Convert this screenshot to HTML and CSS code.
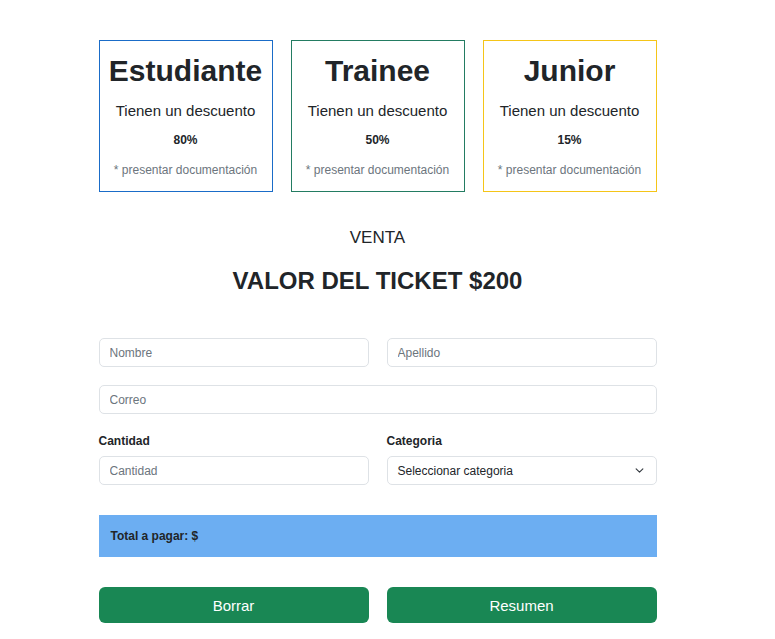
FILE: index.html
```html
<!DOCTYPE html>
<html lang="es">
<head>
<meta charset="utf-8">
<title>Venta</title>
<link rel="stylesheet" href="styles.css">
</head>
<body>
<main class="container">
  <section class="cards">
    <div class="card card-blue">
      <h2 class="card-title">Estudiante</h2>
      <p class="card-sub">Tienen un descuento</p>
      <p class="card-pct">80%</p>
      <p class="card-note">* presentar documentación</p>
    </div>
    <div class="card card-green">
      <h2 class="card-title">Trainee</h2>
      <p class="card-sub">Tienen un descuento</p>
      <p class="card-pct">50%</p>
      <p class="card-note">* presentar documentación</p>
    </div>
    <div class="card card-yellow">
      <h2 class="card-title">Junior</h2>
      <p class="card-sub">Tienen un descuento</p>
      <p class="card-pct">15%</p>
      <p class="card-note">* presentar documentación</p>
    </div>
  </section>

  <p class="venta">VENTA</p>
  <h1 class="valor">VALOR DEL TICKET $200</h1>

  <form class="form">
    <div class="row">
      <input class="field" type="text" placeholder="Nombre">
      <input class="field" type="text" placeholder="Apellido">
    </div>
    <div class="row single">
      <input class="field" type="email" placeholder="Correo">
    </div>
    <div class="row labels">
      <div class="group">
        <label class="label">Cantidad</label>
        <input class="field" type="text" placeholder="Cantidad">
      </div>
      <div class="group">
        <label class="label">Categoria</label>
        <div class="select">
          <span>Seleccionar categoria</span>
          <svg width="9" height="9" viewBox="0 0 16 16"><path d="M2 5l6 6 6-6" fill="none" stroke="#343a40" stroke-width="2" stroke-linecap="round" stroke-linejoin="round"/></svg>
        </div>
      </div>
    </div>
    <div class="total">Total a pagar: $</div>
    <div class="row buttons">
      <button type="button" class="btn">Borrar</button>
      <button type="button" class="btn">Resumen</button>
    </div>
  </form>
</main>
</body>
</html>
```

FILE: styles.css
```css
* { box-sizing: border-box; }
body {
  margin: 0;
  font-family: "Liberation Sans", Arial, sans-serif;
  color: #212529;
  background: #fff;
}
.container {
  width: 558px;
  margin-left: calc(50% - 289px);
  padding-top: 40px;
}
.cards {
  display: grid;
  grid-template-columns: repeat(3, 1fr);
  gap: 18px;
}
.card {
  height: 152px;
  border: 1px solid;
  text-align: center;
  padding-top: 12px;
}
.card-blue { border-color: #1a6cc8; }
.card-green { border-color: #237c62; }
.card-yellow { border-color: #f5c518; }
.card-title {
  margin: 0;
  font-size: 30px;
  line-height: 36px;
  font-weight: 700;
}
.card-sub {
  margin: 13px 0 0;
  font-size: 15px;
  line-height: 18px;
}
.card-pct {
  margin: 13px 0 0;
  font-size: 12px;
  font-weight: 700;
  line-height: 14px;
}
.card-note {
  margin: 16px 0 0;
  font-size: 12px;
  line-height: 14px;
  color: #6c757d;
}
.venta {
  margin: 36px 0 0;
  text-align: center;
  font-size: 17px;
  line-height: 20px;
}
.valor {
  margin: 19px 0 0;
  text-align: center;
  font-size: 24px;
  line-height: 28px;
  font-weight: 700;
}
.form { margin-top: 43px; }
.row {
  display: grid;
  grid-template-columns: 1fr 1fr;
  gap: 18px;
}
.row.single { grid-template-columns: 1fr; margin-top: 18px; }
.row.labels { margin-top: 20px; }
.group { display: flex; flex-direction: column; }
.label {
  font-size: 12px;
  font-weight: 700;
  line-height: 14px;
  margin-bottom: 8px;
}
.field, .select {
  height: 29px;
  width: 100%;
  border: 1px solid #dee2e6;
  border-radius: 5px;
  padding: 0 10px;
  font-family: "Liberation Sans", Arial, sans-serif;
  font-size: 12px;
  color: #212529;
  background: #fff;
}
.field::placeholder { color: #6c757d; }
.select {
  display: flex;
  align-items: center;
  justify-content: space-between;
  padding: 0 12px 0 10px;
}
.total {
  margin-top: 30px;
  height: 42px;
  background: #6caef2;
  display: flex;
  align-items: center;
  padding-left: 12px;
  font-size: 12px;
  font-weight: 700;
}
.buttons { margin-top: 30px; }
.btn {
  height: 36px;
  border: none;
  border-radius: 6px;
  background: #198754;
  color: #fff;
  font-family: "Liberation Sans", Arial, sans-serif;
  font-size: 15px;
}
```
